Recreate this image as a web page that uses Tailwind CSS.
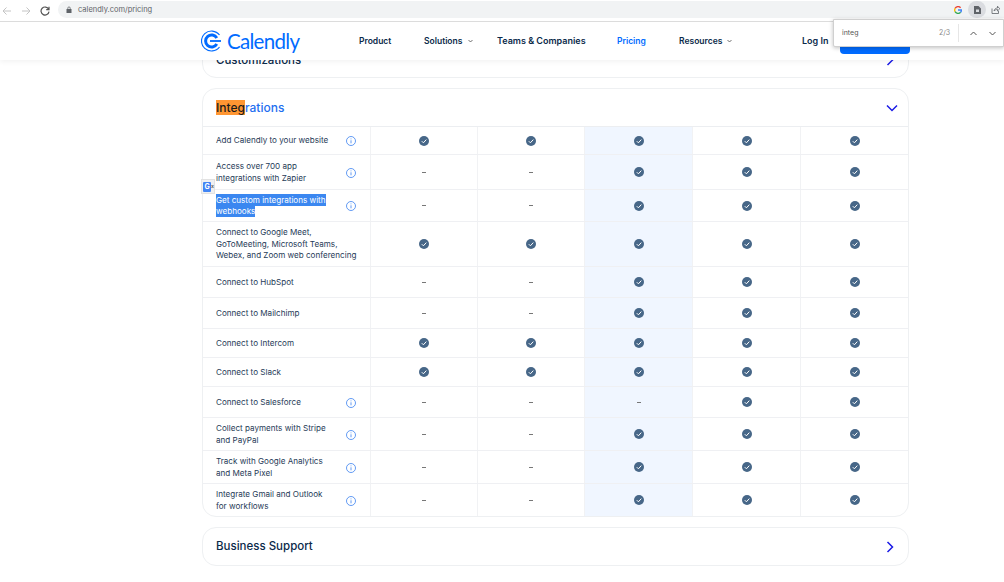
<!DOCTYPE html>
<html lang="en">
  <head>
    <meta charset="UTF-8" />
    <meta name="viewport" content="width=device-width, initial-scale=1.0" />
    <title>Calendly Pricing</title>
    <script src="https://cdn.jsdelivr.net/npm/@tailwindcss/browser@4"></script>
  </head>
  <body class="bg-white font-['Inter',sans-serif]">
    <div class="relative w-[1004px] h-[582px] overflow-hidden bg-white">
      <!-- browser toolbar -->
      <div class="h-[22px] bg-white border-b border-[#dcdcdc] flex items-center relative z-20">
        <div class="flex items-center w-[58px] pl-[2px] gap-[9px] shrink-0">
          <svg class="w-[10px] h-[10px]" viewBox="0 0 10 10" fill="none" stroke="#c4c4c4" stroke-width="1"><path d="M9 5H1M4.500 1.500 1 5l3.500 3.500" /></svg>
          <svg class="w-[10px] h-[10px]" viewBox="0 0 10 10" fill="none" stroke="#c4c4c4" stroke-width="1"><path d="M1 5h8M5.500 1.500 9 5 5.500 8.500" /></svg>
          <svg class="w-[10px] h-[10px]" viewBox="0 0 10 10" fill="none" stroke="#555" stroke-width="1.200"><path d="M8.600 3.200A4 4 0 1 0 9 5.600M9 .8v2.800H6.200" /></svg>
        </div>
        <div class="flex-1 h-[17px] mt-[-2px] bg-[#f1f3f4] rounded-l-full flex items-center pl-[8px] gap-[6px] text-[7.500px] text-[#5f6368]">
          <svg class="w-[6px] h-[7px]" viewBox="0 0 6 7" fill="#5f6368"><path d="M0.500 3h5v4h-5zM1.500 3V2a1.500 1.500 0 0 1 3 0v1h-.7V2a.8.8 0 0 0-1.600 0v1z" /></svg>
          <span>calendly.com/pricing</span>
          <div class="ml-auto flex items-center h-full">
            <svg class="w-[8px] h-[8px] mr-[6px]" viewBox="0 0 8 8" fill="none" stroke-width="1.400">
              <path stroke="#ea4335" d="M6.600 1.700A3.400 3.400 0 0 0 1.100 2.400" />
              <path stroke="#fbbc05" d="M1.100 2.400a3.400 3.400 0 0 0 0 3.200" />
              <path stroke="#34a853" d="M1.100 5.600a3.400 3.400 0 0 0 5.500.7" />
              <path stroke="#4285f4" d="M6.600 6.300A3.400 3.400 0 0 0 7.400 4H4" />
            </svg>
            <div class="w-[18px] h-[17px] rounded-full bg-[#dadce0] flex items-center justify-center mr-[5px]">
              <svg class="w-[7px] h-[8px]" viewBox="0 0 7 8" fill="#5f6368" fill-rule="evenodd"><path d="M0 0h4.500L7 2.500V8H0zM2 3.500v2.500h3V3.500z" /></svg>
            </div>
            <svg class="w-[9px] h-[9px] mr-[4px]" viewBox="0 0 9 9" fill="none" stroke="#5f6368" stroke-width=".8"><path d="M1 3.500V8.500h6.500V6M3 6c.4-2 1.800-3 3.500-3V1.200L8.800 3.800 6.500 6V4.500C5 4.500 4 5 3 6z" /></svg>
          </div>
        </div>
      </div>

      <!-- site nav -->
      <nav class="relative z-10 h-[38px] bg-white shadow-[0_2px_5px_rgba(0,0,0,0.05)] flex items-center text-[8.500px] font-semibold text-[#0b2a4a]">
        <div class="flex items-center ml-[201px] w-[158px] shrink-0">
          <svg class="w-[22px] h-[22px]" viewBox="0 0 22 22" fill="none" stroke="#006bff">
            <path stroke-width="1.200" d="M18.500 5A10 10 0 1 0 18.500 17" />
            <path stroke-width="3" d="M15.800 8A6 6 0 1 0 15.800 14" />
            <path stroke-width="1.800" d="M9 11h11" />
          </svg>
          <span class="ml-[4px] font-['Lato',sans-serif] text-[20.500px] leading-none font-normal text-[#006bff] tracking-[-0.7px]">Calendly</span>
        </div>
        <span class="w-[65px]">Product</span>
        <span class="w-[73px] flex items-center">Solutions <svg class="w-[5px] h-[4px] ml-[6px]" viewBox="0 0 5 4" fill="none" stroke="#333" stroke-width=".7"><path d="m.5 1 2 2 2-2" /></svg></span>
        <span class="w-[120px] text-[9px]">Teams &amp; Companies</span>
        <span class="w-[62px] text-[#006bff]">Pricing</span>
        <span class="w-[123px] flex items-center">Resources <svg class="w-[5px] h-[4px] ml-[5px]" viewBox="0 0 5 4" fill="none" stroke="#333" stroke-width=".7"><path d="m.5 1 2 2 2-2" /></svg></span>
        <span class="w-[38px] text-[9px]">Log In</span>
        <div class="w-[70px] h-[32px] self-start bg-[#006bff] rounded-b-[4px]"></div>
      </nav>

      <!-- accordion cards -->
      <main class="absolute inset-x-0 top-0 pl-[202px] pr-[95px] pt-[22px] flex flex-col">
        <div class="h-[56px] border border-[#eef0f2] rounded-[14px] flex items-end justify-between pl-[13px] pr-[14px] pb-[11px] bg-white">
          <span class="text-[11.500px] leading-none font-medium text-[#0b2a4a]">Customizations</span>
          <svg class="w-[8px] h-[12px]" viewBox="0 0 8 12" fill="none" stroke="#1a1ae6" stroke-width="1.500"><path d="m1.500 1 5 5-5 5" /></svg>
        </div>

        <section class="mt-[10px] border border-[#eef0f2] rounded-[14px] overflow-hidden bg-white">
          <div class="h-[38px] flex items-center justify-between pl-[13px] pr-[10px] border-b border-[#eceef1]">
            <h2 class="text-[12px] font-medium text-[#1f6ff0]"><span class="bg-[#ff9632] text-[#1b1b1b]">Integ</span>rations</h2>
            <svg class="w-[12px] h-[8px]" viewBox="0 0 12 8" fill="none" stroke="#1a1ae6" stroke-width="1.500"><path d="m1 1.500 5 5 5-5" /></svg>
          </div>
          <div id="rows"></div>
        </section>

        <div class="mt-[10px] h-[39px] border border-[#eef0f2] rounded-[14px] flex items-center justify-between pl-[13px] pr-[14px] bg-white">
          <span class="text-[11.500px] font-medium text-[#0b2a4a]">Business Support</span>
          <svg class="w-[8px] h-[12px]" viewBox="0 0 8 12" fill="none" stroke="#1a1ae6" stroke-width="1.500"><path d="m1.500 1 5 5-5 5" /></svg>
        </div>
      </main>

      <!-- google translate bubble -->
      <div class="absolute left-[201px] top-[179px] z-10 w-[14px] h-[15px] bg-[#eef0f2] border border-[#e2e2e2] flex items-center pl-[1px] text-[7px] leading-none">
        <div class="w-[9px] h-[10px] bg-[#4285f4] rounded-[1px] text-white font-bold text-center leading-[10px]">G</div>
        <span class="text-[#5f6368] text-[5px] font-bold">x</span>
      </div>

      <!-- find in page -->
      <div class="absolute z-30 left-[833px] top-[19px] w-[171px] h-[28px] bg-white border border-[#d0d0d0] rounded-bl-[2px] shadow-[0_1px_4px_rgba(0,0,0,0.25)] flex items-center pl-[8px] text-[7px] text-[#555]">
        <span class="w-[97px]">integ</span>
        <span class="w-[19px] text-[#888]">2/3</span>
        <div class="w-px h-[18px] bg-[#e6e6e6]"></div>
        <svg class="w-[7px] h-[5px] ml-[11px]" viewBox="0 0 7 5" fill="none" stroke="#555" stroke-width="1"><path d="m.5 4 3-3 3 3" /></svg>
        <svg class="w-[7px] h-[5px] ml-[12px]" viewBox="0 0 7 5" fill="none" stroke="#555" stroke-width="1"><path d="m.5 1 3 3 3-3" /></svg>
      </div>
    </div>

    <script>
      // y = check, n = dash, for the five plan columns
      const rows = [
        { h: 28, label: "Add Calendly to your website", info: true, plans: "yyyyy" },
        { h: 35, label: "Access over 700 app<br>integrations with Zapier", info: true, plans: "nnyyy" },
        { h: 32, label: '<span class="bg-[#3b87f0] text-white py-[1px]">Get custom integrations with<br>webhooks</span>', info: true, plans: "nnyyy" },
        { h: 45, label: "Connect to Google Meet,<br>GoToMeeting, Microsoft Teams,<br>Webex, and Zoom web conferencing", info: false, plans: "yyyyy" },
        { h: 31, label: "Connect to HubSpot", info: false, plans: "nnyyy" },
        { h: 31, label: "Connect to Mailchimp", info: false, plans: "nnyyy" },
        { h: 29, label: "Connect to Intercom", info: false, plans: "yyyyy" },
        { h: 29, label: "Connect to Slack", info: false, plans: "yyyyy" },
        { h: 31, label: "Connect to Salesforce", info: true, plans: "nnnyy" },
        { h: 33, label: "Collect payments with Stripe<br>and PayPal", info: true, plans: "nnyyy" },
        { h: 33, label: "Track with Google Analytics<br>and Meta Pixel", info: true, plans: "nnyyy" },
        { h: 32, label: "Integrate Gmail and Outlook<br>for workflows", info: true, plans: "nnyyy" },
      ];

      const check = `<svg class="w-[10px] h-[10px]" viewBox="0 0 10 10"><circle cx="5" cy="5" r="5" fill="#476788"/><path d="m2.800 5.200 1.600 1.600 2.900-3.200" fill="none" stroke="#fff" stroke-width="1"/></svg>`;
      const dash = `<span class="w-[4px] h-px bg-[#777]"></span>`;
      const info = `<svg class="w-[10px] h-[10px] shrink-0" viewBox="0 0 10 10" fill="none" stroke="#3b82f0" stroke-width=".8"><circle cx="5" cy="5" r="4.500"/><path d="M5 4.300v3M5 2.500v.8"/></svg>`;

      document.getElementById("rows").innerHTML = rows
        .map((row, i) => {
          const cells = [...row.plans]
            .map((p, col) => {
              const tint = col === 2 ? "bg-[#f0f6ff]" : "";
              const edge = col < 4 ? "border-r border-[#f1f2f4]" : "";
              return `<div class="flex items-center justify-center ${tint} ${edge}">${p === "y" ? check : dash}</div>`;
            })
            .join("");
          const rule = i < rows.length - 1 ? "border-b border-[#eff0f3]" : "";
          return `<div class="grid grid-cols-[168px_107px_107px_108px_108px_1fr] ${rule}" style="height:${row.h}px">
            <div class="flex items-center justify-between pl-[13px] pr-[14px] pt-[1px] border-r border-[#f1f2f4]">
              <span class="text-[8.100px] leading-[11.500px] text-[#1f3b57] whitespace-nowrap">${row.label}</span>
              ${row.info ? info : ""}
            </div>
            ${cells}
          </div>`;
        })
        .join("");
    </script>
  </body>
</html>
